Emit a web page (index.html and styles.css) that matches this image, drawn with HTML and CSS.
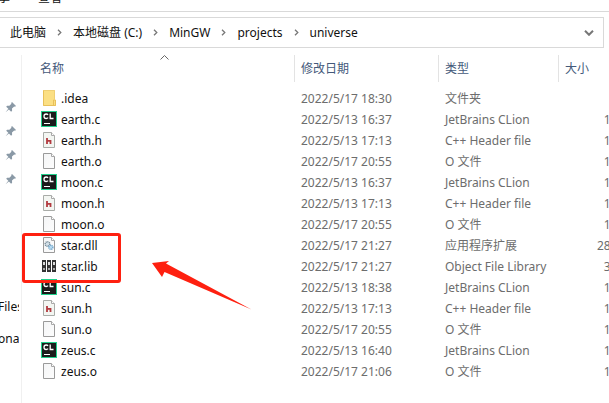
FILE: index.html
```html
<!DOCTYPE html>
<html lang="zh-CN">
<head>
<meta charset="utf-8">
<title>universe</title>
<link rel="stylesheet" href="styles.css">
</head>
<body>
<svg class="defs" aria-hidden="true">
  <defs>
    <linearGradient id="sheet" x2="1" y2="1"><stop stop-color="#f4f5f6"/><stop offset="1" stop-color="#fdfdfd"/></linearGradient>
    <symbol id="page" viewBox="0 0 16 16">
      <path d="M2.5.5h8l3 3v12h-11z" fill="url(#sheet)" stroke="#9a9a9a"/>
      <path d="M10.5.5v3h3" fill="#fff" stroke="#a8a8a8"/>
    </symbol>
    <symbol id="folder" viewBox="0 0 16 16">
      <path d="M2 0h12v10h1v6H2z" fill="#fbdf83"/>
      <path d="M2.5.5h11V9" fill="none" stroke="#efcf74"/>
      <path d="M2.5.5v15h12v-5.500h-2v5" fill="none" stroke="#e8c05a"/>
    </symbol>
    <symbol id="clion" viewBox="0 0 16 16">
      <path d="M0 0h16v16H0z" fill="#22d08c"/>
      <path d="M1 1h14v14H1z" fill="#1b1b1b"/>
      <path d="M7 3.800Q6.400 3 5.200 3C3.900 3 3 3.900 3 5.200s.9 2.300 2.200 2.300q1.200 0 1.900-.9M9.200 2.500v5h3.300" fill="none" stroke="#fff" stroke-width="1.300"/>
      <path d="M3 12h6v1H3z" fill="#fff"/>
    </symbol>
    <symbol id="header" viewBox="0 0 16 16">
      <path d="M2.500.5h8l3 3v12h-11z" fill="#f3f6f2" stroke="#a9aca8"/>
      <path d="M10.500.5v3h3" fill="#fff" stroke="#a8a8a8"/>
      <path d="M6 6v6M6 8.800h3.500V12" fill="none" stroke="#b23a3f" stroke-width="1.800"/>
    </symbol>
    <symbol id="dll" viewBox="0 0 16 16">
      <use href="#page"/>
      <circle cx="6.500" cy="7" r="2.300" fill="#d4e1e9" stroke="#778b98" stroke-width="1.400" stroke-dasharray="1 .6"/>
      <circle cx="9.800" cy="10.300" r="2.100" fill="#b5daf2" stroke="#73a6c9" stroke-width="1.400" stroke-dasharray="1 .6"/>
    </symbol>
    <symbol id="lib" viewBox="0 0 16 16">
      <path d="M1 2h4v12H1zM6 2h4v12H6zM11 2h4v12h-4z" fill="#333"/>
      <path d="M2 4h2v3H2zM7 4h2v3H7zM12 4h2v3h-2z" fill="#ddd"/>
      <path d="M2 10h2v2H2zM7 10h2v2H7zM12 10h2v2h-2z" fill="#aaa"/>
    </symbol>
    <symbol id="pin" viewBox="0 0 12 12">
      <path d="M7 1l4 4-1 .8-.8-.2L7 7.600l.1 2.200-1 .9L3.900 8.500.6 11.300l2.700-3.500L1.200 5.700l.9-1 2.300.1L6.400 2.700 6.200 2z" fill="#8a99a6"/>
    </symbol>
    <symbol id="crumb" viewBox="0 0 5 7">
      <path d="M1 .7l2.800 2.800L1 6.300" fill="none" stroke="#777" stroke-width="1.300"/>
    </symbol>
  </defs>
</svg>

<nav class="ribbon"><a href="#">共享</a><a href="#">查看</a></nav>

<div class="address">
  <nav class="crumbs">
    <svg class="sep"><use href="#crumb"/></svg><a href="#">此电脑</a>
    <svg class="sep"><use href="#crumb"/></svg><a href="#">本地磁盘 (C:)</a>
    <svg class="sep"><use href="#crumb"/></svg><a href="#">MinGW</a>
    <svg class="sep"><use href="#crumb"/></svg><a href="#">projects</a>
    <svg class="sep"><use href="#crumb"/></svg><a href="#">universe</a>
  </nav>
  <button class="history" aria-label="历史记录"><svg viewBox="0 0 10 6"><path d="M1 .8l4 4 4-4" fill="none" stroke="#777" stroke-width="2"/></svg></button>
</div>

<main class="body">
  <aside class="side">
    <ul class="pins">
      <li><svg><use href="#pin"/></svg></li>
      <li><svg><use href="#pin"/></svg></li>
      <li><svg><use href="#pin"/></svg></li>
      <li><svg><use href="#pin"/></svg></li>
    </ul>
    <ul class="tree"><li>Files</li><li>onal</li></ul>
  </aside>
  <section class="files">
    <table>
      <colgroup><col class="c-name"><col class="c-date"><col class="c-type"><col class="c-size"></colgroup>
      <thead><tr>
        <th>名称<svg class="sort" viewBox="0 0 9 5"><path d="M.5 4.500l4-4 4 4" fill="none" stroke="#666"/></svg></th>
        <th>修改日期</th><th>类型</th><th>大小</th>
      </tr></thead>
      <tbody>
        <tr><td><svg><use href="#folder"/></svg>.idea</td><td>2022/5/17 18:30</td><td>文件夹</td><td></td></tr>
        <tr><td><svg><use href="#clion"/></svg>earth.c</td><td>2022/5/13 16:37</td><td>JetBrains CLion</td><td>1 KB</td></tr>
        <tr><td><svg><use href="#header"/></svg>earth.h</td><td>2022/5/13 17:13</td><td>C++ Header file</td><td>1 KB</td></tr>
        <tr><td><svg><use href="#page"/></svg>earth.o</td><td>2022/5/17 20:55</td><td>O 文件</td><td>1 KB</td></tr>
        <tr><td><svg><use href="#clion"/></svg>moon.c</td><td>2022/5/13 16:37</td><td>JetBrains CLion</td><td>1 KB</td></tr>
        <tr><td><svg><use href="#header"/></svg>moon.h</td><td>2022/5/13 17:13</td><td>C++ Header file</td><td>1 KB</td></tr>
        <tr><td><svg><use href="#page"/></svg>moon.o</td><td>2022/5/17 20:55</td><td>O 文件</td><td>1 KB</td></tr>
        <tr><td><svg><use href="#dll"/></svg>star.dll</td><td>2022/5/17 21:27</td><td>应用程序扩展</td><td>28 KB</td></tr>
        <tr><td><svg><use href="#lib"/></svg>star.lib</td><td>2022/5/17 21:27</td><td>Object File Library</td><td>3 KB</td></tr>
        <tr><td><svg><use href="#clion"/></svg>sun.c</td><td>2022/5/13 18:38</td><td>JetBrains CLion</td><td>1 KB</td></tr>
        <tr><td><svg><use href="#header"/></svg>sun.h</td><td>2022/5/13 17:13</td><td>C++ Header file</td><td>1 KB</td></tr>
        <tr><td><svg><use href="#page"/></svg>sun.o</td><td>2022/5/17 20:55</td><td>O 文件</td><td>1 KB</td></tr>
        <tr><td><svg><use href="#clion"/></svg>zeus.c</td><td>2022/5/13 16:40</td><td>JetBrains CLion</td><td>1 KB</td></tr>
        <tr><td><svg><use href="#page"/></svg>zeus.o</td><td>2022/5/17 21:06</td><td>O 文件</td><td>1 KB</td></tr>
      </tbody>
    </table>
  </section>
  <div class="mark"></div>
  <svg class="arrow" viewBox="0 0 100 50" aria-hidden="true"><path d="M0 3L17 1l-3 2.500L99.500 49.500 12.500 12 10 17z" fill="#fe2010"/></svg>
</main>
</body>
</html>
```
FILE: styles.css
```css
* { box-sizing: border-box; }
body {
  margin: 0;
  min-height: 100vh;
  display: flex;
  flex-direction: column;
  overflow: hidden;
  background: #fff;
  color: #111;
  font: 12px/16px "Noto Sans", "Noto Sans CJK SC", sans-serif;
}
a { color: inherit; text-decoration: none; }
ul { margin: 0; padding: 0; list-style: none; }
.defs { position: absolute; width: 0; height: 0; }

.ribbon {
  display: flex;
  align-items: flex-end;
  gap: 28px;
  height: 12px;
  padding-bottom: 5px;
  margin-left: -14px;
  border-bottom: 1px solid #d9d9d9;
}

.address {
  display: flex;
  margin-top: 5px;
  margin-right: 5px;
  height: 31px;
  border: 1px solid #d9d9d9;
  border-left: 0;
}
.crumbs {
  flex: 1;
  display: flex;
  align-items: center;
  gap: 11px;
  margin-left: -6px;
  white-space: nowrap;
}
.sep { width: 5px; height: 7px; flex: none; }
.history {
  width: 28px;
  padding: 0;
  border: 0;
  background: none;
}
.history svg { display: block; width: 10px; height: 6px; margin: 0 auto; }

.body {
  position: relative;
  flex: 1;
  display: flex;
  margin-top: 7px;
}
.side {
  width: 22px;
  padding-top: 40px;
  border-right: 1px solid #f0f0f0;
  flex: none;
}
.pins li { height: 24px; padding: 6px 5px; }
.pins svg { display: block; width: 12px; height: 12px; }
.tree { width: 21px; margin-top: 100px; margin-left: -2px; overflow: hidden; }
.tree li { height: 32px; line-height: 32px; }

.files { flex: 1; min-width: 0; padding-left: 13px; overflow: hidden; }
table { width: 601px; table-layout: fixed; border-collapse: separate; border-spacing: 0; }
.c-name { width: 260px; }
.c-date { width: 144px; }
.c-type { width: 120px; }
th {
  position: relative;
  height: 27px;
  padding: 0 6px;
  border-right: 1px solid #e3e3e3;
  color: #44597a;
  font-weight: 400;
  text-align: left;
}
th:first-child { padding-left: 5px; }
.sort { position: absolute; top: 0; left: 125px; width: 9px; height: 5px; }
tbody::before { content: ""; display: block; height: 6px; }
td {
  height: 21px;
  padding: 0 6px;
  color: #6d6d6d;
  white-space: nowrap;
}
td:first-child {
  display: flex;
  align-items: flex-start;
  gap: 4px;
  padding-top: 2px;
  line-height: 18px;
  color: #111;
}
td svg { width: 16px; height: 16px; flex: none; }
td:last-child { padding-right: 7px; text-align: right; }

.mark {
  position: absolute;
  left: 22px;
  top: 178px;
  width: 99px;
  height: 50px;
  border: 3px solid #fe2010;
  border-radius: 3px;
}
.arrow { position: absolute; left: 152px; top: 205px; width: 100px; height: 50px; }
```
